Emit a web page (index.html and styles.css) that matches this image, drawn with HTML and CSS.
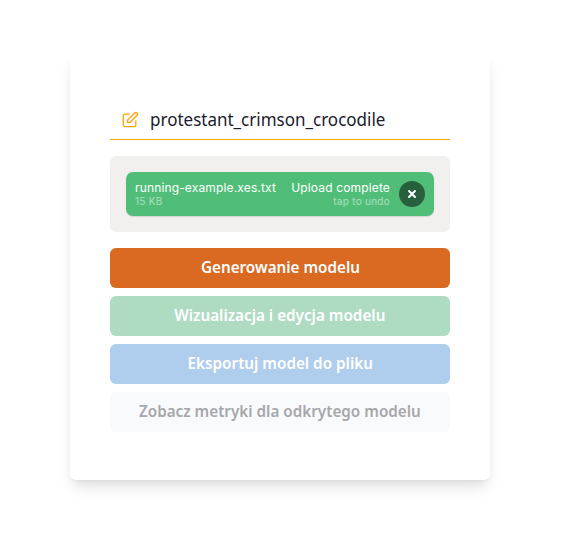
FILE: index.html
```html
<!DOCTYPE html>
<html lang="pl">
<head>
<meta charset="utf-8">
<title>Model</title>
<link rel="stylesheet" href="styles.css">
</head>
<body>
<main class="card">
  <div class="name-row">
    <svg class="edit-icon" viewBox="0 0 24 24" fill="none" stroke="currentColor" stroke-width="1.6" stroke-linecap="round" stroke-linejoin="round"><path d="M11 5H6a2 2 0 00-2 2v11a2 2 0 002 2h11a2 2 0 002-2v-5m-1.414-9.414a2 2 0 112.828 2.828L11.828 15H9v-2.828l8.586-8.586z"/></svg>
    <span class="name">protestant_crimson_crocodile</span>
  </div>
  <div class="upload">
    <div class="file">
      <div class="info">
        <span class="main">running-example.xes.txt</span>
        <span class="sub">15 KB</span>
      </div>
      <div class="info status">
        <span class="main">Upload complete</span>
        <span class="sub">tap to undo</span>
      </div>
      <button class="undo" aria-label="Undo"><svg viewBox="0 0 26 26"><path d="M11.586 13l-2.293 2.293a1 1 0 0 0 1.414 1.414L13 14.414l2.293 2.293a1 1 0 0 0 1.414-1.414L14.414 13l2.293-2.293a1 1 0 0 0-1.414-1.414L13 11.586l-2.293-2.293a1 1 0 0 0-1.414 1.414L11.586 13z" fill="currentColor"/></svg></button>
    </div>
  </div>
  <div class="actions">
    <button class="btn orange"><span class="label">Generowanie modelu</span></button>
    <button class="btn green"><span class="label">Wizualizacja i edycja modelu</span></button>
    <button class="btn blue"><span class="label">Eksportuj model do pliku</span></button>
    <button class="btn gray"><span class="label">Zobacz metryki dla odkrytego modelu</span></button>
  </div>
</main>
</body>
</html>
```

FILE: styles.css
```css
* { box-sizing: border-box; }
body { margin: 0; min-height: 534px; padding: 54px 0 0 70px; background: #fff; font-family: "Noto Sans", sans-serif; }
button { border: 0; padding: 0; font-family: inherit; }
.card {
  width: 420px; height: 426px; padding: 46px 40px 0;
  border-radius: 6px; background: #fff;
  box-shadow: 0 10px 15px -3px rgba(0,0,0,.11), 0 4px 6px -2px rgba(0,0,0,.06);
}
.name-row { display: flex; align-items: center; height: 40px; padding-left: 10px; border-bottom: 1px solid #ffa500; }
.edit-icon { width: 20px; height: 20px; margin-right: 10px; color: #ffa500; }
.name { margin-top: -2px; font-size: 18px; line-height: 28px; color: #1a202c; transform: scaleX(.944); transform-origin: left; }
.upload { height: 76px; margin-top: 16px; padding: 16px; border-radius: 6px; background: #f1f0ef; }
.file { display: flex; align-items: center; height: 44px; padding: 0 9px; border-radius: 7px; background: #50be78; box-shadow: 0 1px 1px rgba(0,0,0,.12); color: #fff; font-family: Inter, sans-serif; }
.info { display: flex; flex-direction: column; flex: 1; margin-top: -2px; white-space: nowrap; }
.status { align-items: flex-end; flex: none; margin-right: 9px; }
.main { font-size: 12px; line-height: 15px; letter-spacing: .15px; }
.sub { font-size: 10px; line-height: 12px; letter-spacing: .27px; opacity: .5; }
.undo { width: 26px; height: 26px; border-radius: 50%; background: #285f3c; color: #fff; }
.undo svg { display: block; width: 26px; height: 26px; }
.actions { display: grid; gap: 8px; margin-top: 16px; }
.btn { height: 40px; padding-bottom: 2px; border-radius: 6px; color: #fff; font-size: 16px; line-height: 24px; font-weight: 600; }
.label { display: inline-block; transform: scaleX(.953); }
.orange { background: #da6921; }
.green { background: #b0dbc3; }
.blue { background: #afcdec; }
.gray { background: #f9fafc; color: #a6a7aa; }
```
